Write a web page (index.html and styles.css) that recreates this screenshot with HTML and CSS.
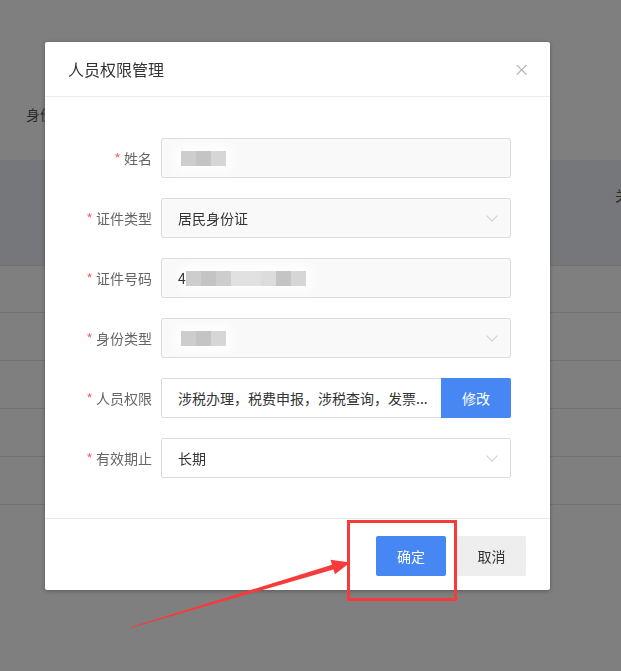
FILE: index.html
```html
<!DOCTYPE html>
<html lang="zh-CN">
<head>
	<meta charset="UTF-8">
	<title>人员权限管理</title>
	<link rel="stylesheet" href="styles.css">
</head>
<body>
	<div class="page">
		<div class="search">身份类型</div>
		<div class="table">
			<div class="thead"><span class="th-right">关联</span></div>
			<div class="tr"></div>
			<div class="tr"></div>
			<div class="tr"></div>
			<div class="tr"></div>
			<div class="tr"></div>
		</div>
	</div>

	<div class="mask"></div>

	<div class="dialog">
		<div class="dialog-head">
			<span class="dialog-title">人员权限管理</span>
			<span class="dialog-close">&times;</span>
		</div>
		<div class="dialog-body">
			<div class="row">
				<label class="label"><i>*</i> 姓名</label>
				<div class="field disabled">
					<span class="mosaic"><b class="m2"></b><b class="m1"></b><b class="m3"></b></span>
				</div>
			</div>
			<div class="row">
				<label class="label"><i>*</i> 证件类型</label>
				<div class="field disabled">
					<span class="val">居民身份证</span>
					<span class="arrow"></span>
				</div>
			</div>
			<div class="row">
				<label class="label"><i>*</i> 证件号码</label>
				<div class="field disabled">
					<span class="val">4</span>
					<span class="mosaic"><b class="m2"></b><b class="m1"></b><b class="m2"></b><b class="m4"></b><b class="m4"></b><b class="m5"></b><b class="m1"></b><b class="m3"></b></span>
				</div>
			</div>
			<div class="row">
				<label class="label"><i>*</i> 身份类型</label>
				<div class="field disabled">
					<span class="mosaic"><b class="m2"></b><b class="m1"></b><b class="m3"></b></span>
					<span class="arrow"></span>
				</div>
			</div>
			<div class="row">
				<label class="label"><i>*</i> 人员权限</label>
				<div class="field group">
					<span class="val grow">涉税办理，税费申报，涉税查询，发票...</span>
					<button class="btn-edit">修改</button>
				</div>
			</div>
			<div class="row">
				<label class="label"><i>*</i> 有效期止</label>
				<div class="field">
					<span class="val">长期</span>
					<span class="arrow"></span>
				</div>
			</div>
		</div>
		<div class="dialog-foot">
			<button class="btn btn-primary">确定</button>
			<button class="btn btn-default">取消</button>
		</div>
	</div>

	<!-- 标注 -->
	<div class="mark-box"></div>
	<svg class="mark-arrow" width="621" height="671" viewBox="0 0 621 671">
		<polygon fill="#f73b3b" points="131,627 332,564.7 330.5,559.8 350,562.5 335,574.2 333.4,569.5 131.4,627.8"/>
	</svg>
</body>
</html>
```

FILE: styles.css
```css
* {
	margin: 0;
	padding: 0;
	box-sizing: border-box;
}
body {
	width: 621px;
	height: 671px;
	overflow: hidden;
	background: #fff;
	font-family: "Noto Sans CJK SC", "Noto Sans", sans-serif;
	font-size: 14px;
	color: #333;
}
.page {
	padding-top: 104px;
}
.search {
	padding-left: 26px;
	height: 56px;
	font-size: 14px;
	color: #555;
}
.table {
	overflow: hidden;
}
.table .thead {
	height: 105px;
	background: #ebeef4;
	position: relative;
}
.th-right {
	position: absolute;
	left: 615px;
	top: 25px;
	white-space: nowrap;
	color: #555;
}
.table .tr {
	height: 48px;
	border-bottom: 1px solid #e2e2e2;
}
.table .thead + .tr {
	border-top: 1px solid #e2e2e2;
}
.mask {
	position: fixed;
	left: 0;
	top: 0;
	width: 100%;
	height: 100%;
	background: rgba(0, 0, 0, .5);
}

.dialog {
	position: absolute;
	left: 45px;
	top: 42px;
	width: 505px;
	background: #fff;
	border-radius: 2px;
	box-shadow: 0 1px 4px rgba(0, 0, 0, .3);
}
.dialog-head {
	height: 55px;
	padding: 0 20px 0 23px;
	display: flex;
	align-items: center;
	justify-content: space-between;
	border-bottom: 1px solid #ebebeb;
}
.dialog-title {
	font-size: 16px;
	color: #333;
}
.dialog-close {
	font-family: "DejaVu Sans", sans-serif;
	font-size: 20px;
	font-weight: 300;
	color: #aaa;
	line-height: 1;
}
.dialog-body {
	padding: 41px 39px 40px 0;
	display: flex;
	flex-direction: column;
	gap: 20px;
}
.row {
	display: flex;
	align-items: center;
	height: 40px;
}
.label {
	width: 107px;
	text-align: right;
	color: #666;
	margin-right: 9px;
	white-space: nowrap;
}
.label i {
	font-style: normal;
	color: #f56c6c;
}
.field {
	width: 350px;
	height: 40px;
	border: 1px solid #dcdcdc;
	border-radius: 2px;
	background: #fff;
	display: flex;
	align-items: center;
	padding-left: 16px;
	position: relative;
}
.field.disabled {
	background: #f9f9f9;
}
.val {
	color: #333;
	position: relative;
	z-index: 1;
}
.grow {
	flex: 1;
	white-space: nowrap;
}
.field.group {
	padding-right: 0;
}
.btn-edit {
	width: 70px;
	height: 40px;
	margin: -1px -1px -1px 0;
	border: none;
	border-radius: 0 2px 2px 0;
	background: #4687f4;
	color: #fff;
	font-family: inherit;
	font-size: 14px;
}
.arrow {
	position: absolute;
	right: 14px;
	top: 13px;
	width: 8px;
	height: 8px;
	border-right: 1px solid #cdd0d6;
	border-bottom: 1px solid #cdd0d6;
	transform: rotate(45deg);
}
.mosaic {
	display: flex;
	margin-left: 3px;
	box-shadow: 0 0 8px 6px rgba(255, 255, 255, .8);
	background: rgba(255, 255, 255, .8);
}
.mosaic b {
	display: block;
	width: 15px;
	height: 15px;
}
.m1 { background: #c4c4c4; }
.m2 { background: #cdcdcd; }
.m3 { background: #d6d6d6; }
.m4 { background: #e1e1e1; }
.m5 { background: #dcdcdc; }
.field .val + .mosaic {
	margin-left: 0;
}

.dialog-foot {
	height: 72px;
	border-top: 1px solid #e8e8e8;
	display: flex;
	justify-content: flex-end;
	align-items: flex-start;
	padding: 17px 24px 0 0;
	gap: 11px;
}
.btn {
	height: 40px;
	border: none;
	border-radius: 2px;
	font-family: inherit;
	font-size: 14px;
}
.btn-primary {
	width: 70px;
	background: #4687f4;
	color: #fff;
}
.btn-default {
	width: 69px;
	background: #eeeeee;
	color: #333;
}

.mark-box {
	position: absolute;
	left: 347px;
	top: 520px;
	width: 110px;
	height: 81px;
	border: 3px solid #f73b3b;
}
.mark-arrow {
	position: absolute;
	left: 0;
	top: 0;
}
```
